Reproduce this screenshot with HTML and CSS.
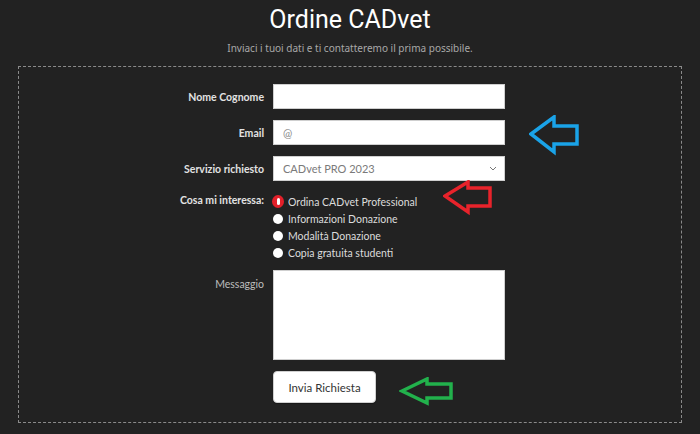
FILE: index.html
```html
<!DOCTYPE html>
<html lang="it">
<head>
<meta charset="utf-8">
<title>Ordine CADvet</title>
<link rel="stylesheet" href="styles.css">
</head>
<body>
<div class="page">
  <header class="head">
    <h1 class="title">Ordine CADvet</h1>
    <p class="subtitle">Inviaci i tuoi dati e ti contatteremo il prima possibile.</p>
  </header>
  <form class="box">
    <div class="grid">
      <label class="lbl">Nome Cognome</label>
      <input class="field" type="text">

      <label class="lbl">Email</label>
      <input class="field" type="text" placeholder="@">

      <label class="lbl">Servizio richiesto</label>
      <div class="selwrap">
        <div class="field sel">CADvet PRO 2023</div>
        <svg class="chev" width="8" height="5" viewBox="0 0 8 5"><path d="M1 1 L4 4 L7 1" fill="none" stroke="#777" stroke-width="1"/></svg>
      </div>

      <label class="lbl lbl-radio">Cosa mi interessa:</label>
      <div class="radios">
        <div class="ritem"><span class="dot dot-on"><span class="pill"></span></span>Ordina CADvet Professional</div>
        <div class="ritem"><span class="dot"></span>Informazioni Donazione</div>
        <div class="ritem"><span class="dot"></span>Modalità Donazione</div>
        <div class="ritem"><span class="dot"></span>Copia gratuita studenti</div>
      </div>

      <label class="lbl lbl-msg">Messaggio</label>
      <textarea class="area"></textarea>

      <span></span>
      <div><button class="btn" type="button">Invia Richiesta</button></div>
    </div>
  </form>

  <svg class="arrow arrow-blue" width="52" height="42" viewBox="0 0 52 42">
    <polygon points="2,19 25,2 25,11 48,11 48,29 25,29 25,37" fill="none" stroke="#1aa3e8" stroke-width="3.5" stroke-linejoin="miter"/>
  </svg>
  <svg class="arrow arrow-red" width="50" height="36" viewBox="0 0 50 36">
    <polygon points="2,16 25,2 25,8 47,8 47,26 25,26 25,32" fill="none" stroke="#e8232b" stroke-width="3.5"/>
  </svg>
  <svg class="arrow arrow-green" width="58" height="30" viewBox="0 0 58 30">
    <polygon points="3,14 28,2 28,7 52,7 52,21 28,21 28,26" fill="none" stroke="#22b14c" stroke-width="3.5"/>
  </svg>
</div>
</body>
</html>
```
FILE: styles.css
```css
html, body {
  margin: 0;
  padding: 0;
  background: #222222;
}
body {
  font-family: Lato, "Noto Sans", sans-serif;
  color: #e6e6e6;
}
.page {
  position: relative;
  width: 700px;
  height: 434px;
  overflow: hidden;
}
.head {
  text-align: center;
  padding-top: 4px;
}
.title {
  margin: 0;
  font-family: Roboto, "Noto Sans", sans-serif;
  font-weight: 400;
  font-size: 25px;
  line-height: 32px;
  color: #ffffff;
}
.subtitle {
  margin: 5px 0 0 0;
  font-family: "Noto Sans", sans-serif;
  font-size: 10px;
  line-height: 14px;
  color: #a8a8a8;
}
.box {
  margin: 11px 18px 0 18px;
  height: 355px;
  border: 1px dashed #8a8a8a;
  box-sizing: content-box;
}
.grid {
  display: grid;
  grid-template-columns: 245px 232px;
  column-gap: 9px;
  row-gap: 11px;
  padding-top: 17px;
  align-items: center;
}
.lbl {
  text-align: right;
  font-size: 10.5px;
  font-weight: 700;
  color: #e2e2e2;
}
.lbl-radio {
  align-self: start;
  padding-top: 2px;
}
.lbl-msg {
  align-self: start;
  font-weight: 400;
  color: #bdbdbd;
  padding-top: 6px;
}
.field {
  box-sizing: border-box;
  height: 25px;
  width: 232px;
  margin: 0;
  border: 1px solid #cfcfcf;
  background: #ffffff;
  font-family: inherit;
  font-size: 11px;
  padding: 0 9px;
  color: #333;
  outline: none;
}
.field::placeholder {
  color: #888;
}
.selwrap {
  position: relative;
}
.sel {
  display: flex;
  align-items: center;
  color: #7a7a7a;
}
.chev {
  position: absolute;
  right: 8px;
  top: 10px;
}
.radios {
  display: flex;
  flex-direction: column;
  margin-top: 1px;
}
.ritem {
  display: flex;
  align-items: center;
  height: 17px;
  font-size: 10.5px;
  color: #dcdcdc;
}
.dot {
  width: 10px;
  height: 10px;
  border-radius: 50%;
  background: #ffffff;
  margin-right: 5px;
  display: inline-flex;
  align-items: center;
  justify-content: center;
  flex: none;
}
.dot-on {
  width: 12px;
  height: 13px;
  margin-left: -1px;
  margin-right: 4px;
  background: #e3202a;
}
.pill {
  width: 3px;
  height: 7px;
  border-radius: 2px;
  background: #ffffff;
}
.area {
  box-sizing: border-box;
  width: 232px;
  height: 90px;
  margin: -2px 0 0 0;
  border: 1px solid #cfcfcf;
  background: #ffffff;
  resize: none;
  outline: none;
}
.btn {
  width: 103px;
  height: 32px;
  border: 1px solid #d0d0d0;
  border-radius: 4px;
  background: #ffffff;
  font-family: inherit;
  font-size: 11.5px;
  color: #333;
  padding: 0;
  box-shadow: 0 1px 1px rgba(0,0,0,0.3);
}
.arrow {
  position: absolute;
}
.arrow-blue { left: 529px; top: 115px; }
.arrow-red { left: 443px; top: 180px; }
.arrow-green { left: 399px; top: 377px; }
```
